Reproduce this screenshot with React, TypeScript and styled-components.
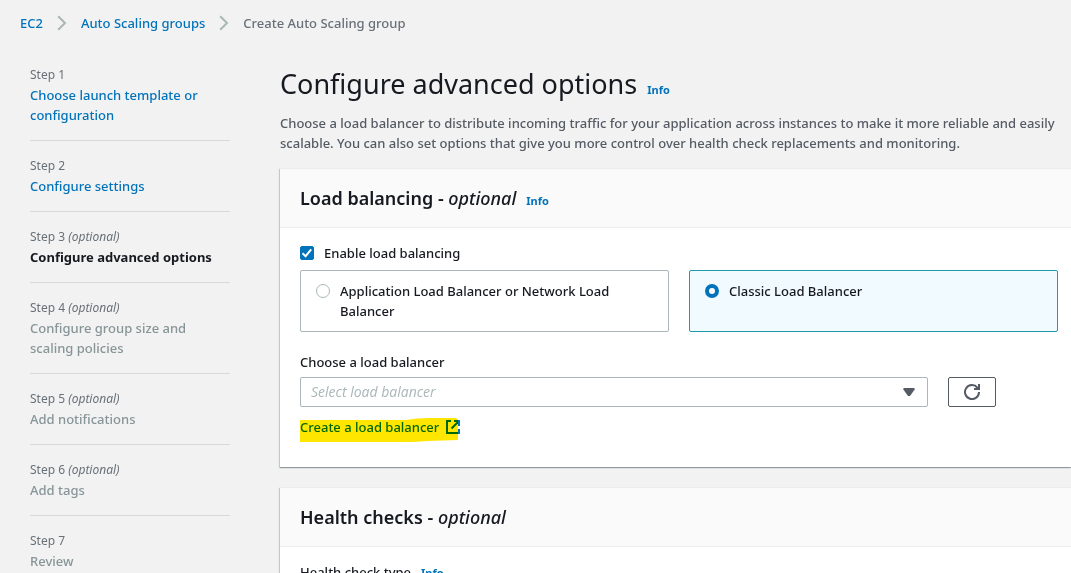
import React, { useState } from "react";
import styled, { createGlobalStyle, css } from "styled-components";

const GlobalStyle = createGlobalStyle`
  *, *::before, *::after { box-sizing: border-box; }
  html { scrollbar-width: none; background: #f2f2f2; }
  body {
    margin: 0;
    color: #16191f;
    font-family: "Noto Sans", "Open Sans", sans-serif;
    font-size: 13px;
    font-weight: 500;
    line-height: 20px;
  }
`;

const Page = styled.div`
  padding-top: 13px;
`;

const Link = styled.a`
  color: #0073bb;
  text-decoration: none;
`;

const InfoLink = styled(Link)`
  margin-left: 10px;
  font-size: 11px;
  font-weight: 700;
  line-height: 1;
`;

const Breadcrumbs = styled.ol`
  display: flex;
  align-items: center;
  margin: 0;
  padding: 0 20px;
  list-style: none;
`;

const Crumb = styled.li`
  display: flex;
  align-items: center;
  color: #687078;
`;

const Chevron = styled.svg`
  margin: 0 14px;
  fill: none;
  stroke: #aab7b8;
  stroke-width: 2;
`;

const Columns = styled.div`
  display: grid;
  grid-template-columns: 200px minmax(0, 1fr);
  gap: 50px;
  padding-left: 30px;
`;

const Steps = styled.ol`
  margin: 0;
  padding: 17px 0 0;
  list-style: none;
`;

const StepItem = styled.li`
  padding: 15px 0;
  border-bottom: 1px solid #d5d9d9;
  &:last-child { border-bottom: 0; }
`;

const StepLabel = styled.div`
  color: #687078;
  font-size: 12px;
  font-weight: 400;
`;

const StepTitle = styled.div<{ $state: StepState }>`
  padding-right: 10px;
  color: #879596;
  ${(p) => p.$state === "current" && css`
    color: #16191f;
    font-weight: 700;
  `}
`;

const Main = styled.main`
  display: flex;
  flex-direction: column;
  gap: 20px;
  padding: 32px 0 20px;
`;

const Intro = styled.header`
  margin-bottom: -5px;
`;

const PageTitle = styled.h1`
  margin: 0 0 10px;
  font-size: 27px;
  font-weight: 400;
  line-height: 38px;
`;

const Description = styled.p`
  margin: 0;
  color: #545b64;
`;

const Card = styled.section`
  border-top: 1px solid #eaeded;
  background: #fff;
  box-shadow: 0 1px 1px 0 rgba(0, 28, 36, 0.3), -1px 1px 1px 0 rgba(0, 28, 36, 0.15);
`;

const CardHeader = styled.header`
  padding: 17px 20px;
  border-bottom: 1px solid #eaeded;
  background: #fafafa;
`;

const CardTitle = styled.h2`
  margin: 0;
  font-size: 18px;
  font-weight: 600;
  line-height: 24px;
`;

const Optional = styled.em`
  font-weight: 500;
`;

const CardBody = styled.div`
  padding: 15px 13px 30px 20px;
`;

const CheckLabel = styled.label`
  display: flex;
  align-items: center;
  gap: 10px;
`;

const CheckWrap = styled.span`
  display: grid;
  & > * { grid-area: 1 / 1; }
`;

const CheckBox = styled.input`
  appearance: none;
  width: 14px;
  height: 14px;
  margin: 0;
  border: 1px solid #aab7b8;
  border-radius: 2px;
  &:checked { border-color: #0073bb; background: #0073bb; }
`;

const CheckMark = styled.svg`
  fill: none;
  stroke: #fff;
  stroke-width: 2;
  pointer-events: none;
`;

const Tiles = styled.div`
  display: grid;
  grid-template-columns: 1fr 1fr;
  gap: 20px;
  margin: 7px 0 20px;
`;

const Tile = styled.label<{ $selected: boolean }>`
  display: flex;
  gap: 10px;
  padding: 10px 15px;
  border: 1px solid ${(p) => (p.$selected ? "#1f9aa8" : "#aab7b8")};
  border-radius: 2px;
  background: ${(p) => (p.$selected ? "#f1faff" : "#fff")};
`;

const Radio = styled.input`
  appearance: none;
  flex: none;
  width: 14px;
  height: 14px;
  margin: 3px 0;
  border: 1px solid #aab7b8;
  border-radius: 50%;
  background: #fff;
  &:checked { border: 4px solid #0073bb; }
`;

const FieldLabel = styled.label`
  display: block;
  margin-bottom: 5px;
`;

const FieldRow = styled.div`
  display: flex;
  gap: 20px;
  max-width: 696px;
  margin-bottom: 10px;
`;

const SelectWrap = styled.div`
  display: grid;
  flex: 1;
  align-items: center;
  & > * { grid-area: 1 / 1; }
`;

const Select = styled.select`
  appearance: none;
  width: 100%;
  height: 30px;
  padding: 0 30px 0 10px;
  border: 1px solid #aab7b8;
  border-radius: 2px;
  background: #fff;
  color: #aab7b8;
  font: italic 14px/20px "Open Sans", "Noto Sans", sans-serif;
`;

const Caret = styled.svg`
  justify-self: end;
  margin-right: 13px;
  fill: #545b64;
  pointer-events: none;
`;

const IconButton = styled.button`
  display: flex;
  align-items: center;
  justify-content: center;
  width: 48px;
  height: 30px;
  padding: 0;
  border: 1px solid #545b64;
  border-radius: 2px;
  background: #fff;
  color: #545b64;
`;

const MarkedLink = styled(Link)`
  display: inline-flex;
  position: relative;
  align-items: center;
  gap: 6px;
  vertical-align: top;
`;

const Highlight = styled.svg`
  position: absolute;
  top: 0;
  left: 0;
  fill: #ffe600;
  mix-blend-mode: multiply;
  pointer-events: none;
`;

type StepState = "done" | "current" | "upcoming";

const steps: { title: string; optional?: boolean; state: StepState }[] = [
  { title: "Choose launch template or configuration", state: "done" },
  { title: "Configure settings", state: "done" },
  { title: "Configure advanced options", optional: true, state: "current" },
  { title: "Configure group size and scaling policies", optional: true, state: "upcoming" },
  { title: "Add notifications", optional: true, state: "upcoming" },
  { title: "Add tags", optional: true, state: "upcoming" },
  { title: "Review", state: "upcoming" },
];

const balancers = ["Application Load Balancer or Network Load Balancer", "Classic Load Balancer"];

const CrumbChevron = () => (
  <Chevron width="10" height="16" viewBox="0 0 10 16" aria-hidden="true">
    <path d="M1.2 1.2 8 8l-6.8 6.8" />
  </Chevron>
);

export default function App() {
  const [enabled, setEnabled] = useState(true);
  const [balancer, setBalancer] = useState(balancers[1]);

  return (
    <Page>
      <GlobalStyle />
      <nav aria-label="Breadcrumbs">
        <Breadcrumbs>
          <Crumb><Link href="#ec2">EC2</Link><CrumbChevron /></Crumb>
          <Crumb><Link href="#groups">Auto Scaling groups</Link><CrumbChevron /></Crumb>
          <Crumb aria-current="page">Create Auto Scaling group</Crumb>
        </Breadcrumbs>
      </nav>
      <Columns>
        <nav aria-label="Steps">
          <Steps>
            {steps.map((step, i) => (
              <StepItem key={step.title}>
                <StepLabel>
                  Step {i + 1}{step.optional && <> <em>(optional)</em></>}
                </StepLabel>
                <StepTitle $state={step.state}>
                  {step.state === "done" ? <Link href={`#step-${i + 1}`}>{step.title}</Link> : step.title}
                </StepTitle>
              </StepItem>
            ))}
          </Steps>
        </nav>
        <Main>
          <Intro>
            <PageTitle>
              Configure advanced options
              <InfoLink href="#info">Info</InfoLink>
            </PageTitle>
            <Description>
              Choose a load balancer to distribute incoming traffic for your application across instances
              to make it more reliable and easily scalable. You can also set options that give you more
              control over health check replacements and monitoring.
            </Description>
          </Intro>
          <Card>
            <CardHeader>
              <CardTitle>
                Load balancing - <Optional>optional</Optional>
                <InfoLink href="#load-balancing-info">Info</InfoLink>
              </CardTitle>
            </CardHeader>
            <CardBody>
              <CheckLabel>
                <CheckWrap>
                  <CheckBox type="checkbox" checked={enabled} onChange={(e) => setEnabled(e.target.checked)} />
                  <CheckMark width="14" height="14" viewBox="0 0 14 14" aria-hidden="true">
                    <path d="M2.5 7.2 5.6 10.2 11.2 3.4" />
                  </CheckMark>
                </CheckWrap>
                Enable load balancing
              </CheckLabel>
              <Tiles role="radiogroup" aria-label="Load balancer type">
                {balancers.map((name) => (
                  <Tile key={name} $selected={name === balancer}>
                    <Radio
                      type="radio"
                      name="balancer"
                      checked={name === balancer}
                      onChange={() => setBalancer(name)}
                    />
                    {name}
                  </Tile>
                ))}
              </Tiles>
              <FieldLabel htmlFor="load-balancer">Choose a load balancer</FieldLabel>
              <FieldRow>
                <SelectWrap>
                  <Select id="load-balancer" defaultValue="">
                    <option value="">Select load balancer</option>
                  </Select>
                  <Caret width="12" height="8" viewBox="0 0 12 8" aria-hidden="true">
                    <path d="M1 0h10l1 1-5 7H5L0 1z" />
                  </Caret>
                </SelectWrap>
                <IconButton type="button" aria-label="Refresh">
                  <svg width="16" height="16" viewBox="0 0 16 16" fill="none" stroke="currentColor" strokeWidth="2" aria-hidden="true">
                    <path d="M15 8a7 7 0 1 1-1.6-4.4L15 5.2M15 0v5h-5" />
                  </svg>
                </IconButton>
              </FieldRow>
              <MarkedLink href="#create">
                Create a load balancer
                <svg width="16" height="16" viewBox="0 0 16 16" fill="none" stroke="currentColor" strokeWidth="2" aria-hidden="true">
                  <path d="M6 2H2v12h12v-4M9 2h5v5M14 2 6.5 9.5" />
                </svg>
                <Highlight width="158" height="26" viewBox="0 0 158 26" aria-hidden="true">
                  <path d="M0 3 106 3Q116 1 130 1L156 1 158 3V23L128 24 112 25H0z" />
                </Highlight>
              </MarkedLink>
            </CardBody>
          </Card>
          <Card>
            <CardHeader>
              <CardTitle>Health checks - <Optional>optional</Optional></CardTitle>
            </CardHeader>
            <CardBody>
              Health check type
              <InfoLink href="#health-check-info">Info</InfoLink>
            </CardBody>
          </Card>
        </Main>
      </Columns>
    </Page>
  );
}
